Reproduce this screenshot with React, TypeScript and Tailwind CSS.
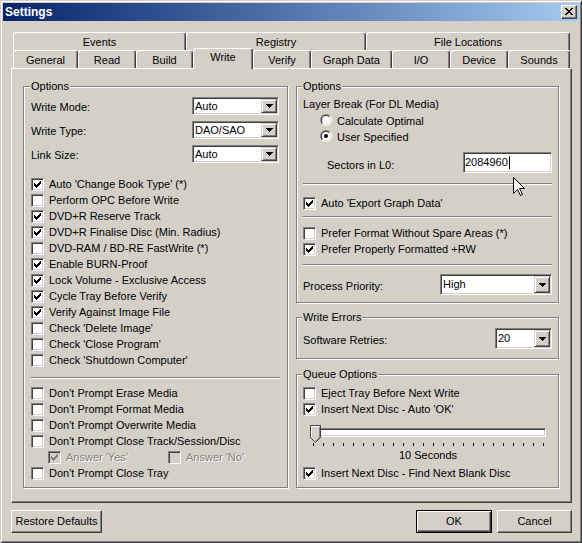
import { useId } from 'react';

// classic 3D edges
const sunken =
  'border border-t-[#808080] border-l-[#808080] border-r-white border-b-white shadow-[inset_1px_1px_#404040,inset_-1px_-1px_#d4d0c8]';
const raised =
  'border border-t-[#d4d0c8] border-l-[#d4d0c8] border-r-[#404040] border-b-[#404040] shadow-[inset_1px_1px_#fff,inset_-1px_-1px_#808080] bg-[#d4d0c8]';
const pushButton =
  'flex items-center justify-center border border-t-white border-l-white border-r-[#404040] border-b-[#404040] shadow-[inset_-1px_-1px_#808080]';

const topTabs = [
  { label: 'Events', w: 'w-[173px]' },
  { label: 'Registry', w: 'w-[180px]' },
  { label: 'File Locations', w: 'w-[204px]' },
];

const tabs = [
  { label: 'General', w: 'w-[65px]' },
  { label: 'Read', w: 'w-[58px]' },
  { label: 'Build', w: 'w-[57px]' },
  { label: 'Write', w: 'w-[60px]', active: true },
  { label: 'Verify', w: 'w-[58px]' },
  { label: 'Graph Data', w: 'w-[81px]' },
  { label: 'I/O', w: 'w-[58px]' },
  { label: 'Device', w: 'w-[58px]' },
  { label: 'Sounds', w: 'w-[62px]' },
];

const writeChecks: [string, boolean][] = [
  ["Auto 'Change Book Type' (*)", true],
  ['Perform OPC Before Write', false],
  ['DVD+R Reserve Track', true],
  ['DVD+R Finalise Disc (Min. Radius)', true],
  ['DVD-RAM / BD-RE FastWrite (*)', false],
  ['Enable BURN-Proof', true],
  ['Lock Volume - Exclusive Access', true],
  ['Cycle Tray Before Verify', true],
  ['Verify Against Image File', true],
  ["Check 'Delete Image'", false],
  ["Check 'Close Program'", false],
  ["Check 'Shutdown Computer'", false],
];

const CHECK_PIXELS = [0, 1, 2, 3, 4, 5, 6].map((x) => [x, x <= 2 ? x + 2 : 6 - x]);

function CheckMark({ color }: { color: string }) {
  return (
    <svg width="7" height="7" viewBox="0 0 7 7" shapeRendering="crispEdges">
      {CHECK_PIXELS.map(([x, y]) => (
        <rect key={x} x={x} y={y} width="1" height="3" fill={color} />
      ))}
    </svg>
  );
}

function Box({ checked, disabled }: { checked?: boolean; disabled?: boolean }) {
  return (
    <span
      className={`mt-px flex h-[13px] w-[13px] shrink-0 items-center justify-center ${sunken} ${
        disabled ? 'bg-[#d4d0c8]' : 'bg-white'
      }`}
    >
      {checked && <CheckMark color={disabled ? '#808080' : '#000'} />}
    </span>
  );
}

function CheckRow({
  label,
  checked,
  disabled,
  className = '',
}: {
  label: string;
  checked?: boolean;
  disabled?: boolean;
  className?: string;
}) {
  return (
    <div className={`flex h-[16px] items-start ${className}`}>
      <Box checked={checked} disabled={disabled} />
      <span
        className={`ml-[5px] whitespace-nowrap leading-[14px] ${
          disabled ? 'text-[#808080] [text-shadow:1px_1px_0_#fff]' : ''
        }`}
      >
        {label}
      </span>
    </div>
  );
}

function Radio({ label, checked }: { label: string; checked?: boolean }) {
  const id = useId();
  return (
    <div className="flex h-[16px] items-center pl-[17px]">
      <svg width="12" height="12" viewBox="0 0 12 12">
        <defs>
          <clipPath id={`${id}a`}>
            <polygon points="0,0 12,0 0,12" />
          </clipPath>
          <clipPath id={`${id}b`}>
            <polygon points="12,0 12,12 0,12" />
          </clipPath>
        </defs>
        <circle cx="6" cy="6" r="6" fill="#808080" clipPath={`url(#${id}a)`} />
        <circle cx="6" cy="6" r="6" fill="#fff" clipPath={`url(#${id}b)`} />
        <circle cx="6" cy="6" r="5" fill="#404040" clipPath={`url(#${id}a)`} />
        <circle cx="6" cy="6" r="5" fill="#d4d0c8" clipPath={`url(#${id}b)`} />
        <circle cx="6" cy="6" r="4" fill="#fff" />
        {checked && <circle cx="6" cy="6" r="2" fill="#000" />}
      </svg>
      <span className="ml-[5px] mt-px leading-[16px]">{label}</span>
    </div>
  );
}

function Combo({ value, className }: { value: string; className: string }) {
  return (
    <div className={`flex bg-white p-px ${sunken} ${className}`}>
      <span className="flex flex-1 items-center pl-[1px]">{value}</span>
      <span className={`flex w-[16px] items-center justify-center ${raised}`}>
        <svg width="7" height="4" viewBox="0 0 7 4" shapeRendering="crispEdges">
          <rect x="0" y="0" width="7" height="1" />
          <rect x="1" y="1" width="5" height="1" />
          <rect x="2" y="2" width="3" height="1" />
          <rect x="3" y="3" width="1" height="1" />
        </svg>
      </span>
    </div>
  );
}

function Separator({ className = '' }: { className?: string }) {
  return <div className={`h-[2px] border-y border-t-[#808080] border-b-white ${className}`} />;
}

function Group({
  title,
  className,
  children,
}: {
  title: string;
  className: string;
  children: React.ReactNode;
}) {
  return (
    <fieldset
      className={`min-w-0 border border-[#808080] shadow-[1px_1px_0_#fff,inset_1px_1px_0_#fff] ${className}`}
    >
      <legend className="-ml-px bg-[#d4d0c8] px-px leading-[13px]">{title}</legend>
      {children}
    </fieldset>
  );
}

function Tab({ label, w, active }: { label: string; w: string; active?: boolean }) {
  return (
    <div
      className={`flex justify-center rounded-t-[3px] border-x border-t border-l-white border-t-white border-r-[#404040] bg-[#d4d0c8] leading-[17px] shadow-[inset_-1px_0_#808080] ${w} ${
        active ? 'relative z-10 -mt-[2px] h-[21px]' : 'h-[18px] pt-px'
      }`}
    >
      {label}
    </div>
  );
}

export default function App() {
  return (
    <div className="relative h-[543px] w-[582px] overflow-hidden bg-[#d4d0c8] p-[3px] font-['Liberation_Sans',Arial,sans-serif] text-[11px] text-black shadow-[inset_1px_1px_#d4d0c8,inset_-1px_-1px_#404040,inset_2px_2px_#fff,inset_-2px_-2px_#808080]">
      {/* title bar */}
      <div className="flex h-[18px] items-center justify-between bg-linear-to-r from-[#0a246a] to-[#a6caf0] px-[2px]">
        <span className="text-[12px] font-bold leading-[18px] text-white">Settings</span>
        <div className={`flex h-[14px] w-[16px] items-start justify-start pl-[3px] pt-[2px] ${pushButton} bg-[#d4d0c8]`}>
          <svg width="8" height="7" viewBox="0 0 8 7" shapeRendering="crispEdges">
            {[0, 1, 2, 3, 4, 5, 6].map((y) => {
              const x = y <= 3 ? y : 6 - y;
              return (
                <g key={y}>
                  <rect x={x} y={y} width="2" height="1" />
                  <rect x={6 - x} y={y} width="2" height="1" />
                </g>
              );
            })}
          </svg>
        </div>
      </div>

      <div className="px-[8px] pt-[11px]">
        {/* tabs */}
        <div className="flex pl-[2px]">
          {topTabs.map((t) => (
            <Tab key={t.label} label={t.label} w={t.w} />
          ))}
        </div>
        <div className="flex h-[18px] pl-[2px]">
          {tabs.map((t) => (
            <Tab key={t.label} label={t.label} w={t.w} active={t.active} />
          ))}
        </div>

        {/* page */}
        <div className="flex h-[435px] w-[561px] gap-[8px] border border-t-white border-l-white border-r-[#404040] border-b-[#404040] pl-[11px] pt-[11px] shadow-[inset_-1px_-1px_#808080]">
          <Group title="Options" className="h-[408px] w-[265px] px-[7px]">
            <div className="mt-[4px] flex flex-col gap-[6px] pr-px">
              {[
                ['Write Mode:', 'Auto'],
                ['Write Type:', 'DAO/SAO'],
                ['Link Size:', 'Auto'],
              ].map(([label, value]) => (
                <div key={label} className="flex h-[18px] items-center justify-between">
                  <span className="mt-[3px]">{label}</span>
                  <Combo value={value} className="h-[18px] w-[87px]" />
                </div>
              ))}
            </div>
            <div className="mt-[14px]">
              {writeChecks.map(([label, checked]) => (
                <CheckRow key={label} label={label} checked={checked} />
              ))}
            </div>
            <Separator className="mt-[8px]" />
            <div className="mt-[7px]">
              <CheckRow label="Don't Prompt Erase Media" />
              <CheckRow label="Don't Prompt Format Media" />
              <CheckRow label="Don't Prompt Overwrite Media" />
              <CheckRow label="Don't Prompt Close Track/Session/Disc" />
              <div className="flex pl-[17px]">
                <CheckRow label="Answer 'Yes'" checked disabled className="w-[120px]" />
                <CheckRow label="Answer 'No'" disabled />
              </div>
              <CheckRow label="Don't Prompt Close Tray" />
            </div>
          </Group>

          <div className="flex w-[263px] flex-col">
            <Group title="Options" className="h-[223px] px-[6px]">
              <div className="mt-[3px] h-[16px] leading-[16px]">Layer Break (For DL Media)</div>
              <Radio label="Calculate Optimal" />
              <Radio label="User Specified" checked />
              <div className="mt-[8px] flex h-[21px] items-center justify-between">
                <span className="mt-[5px] pl-[24px]">Sectors in L0:</span>
                <div className={`flex h-[21px] w-[89px] items-center bg-white pl-px ${sunken}`}>
                  <span>2084960</span>
                  <span className="ml-px h-[13px] w-px bg-black" />
                </div>
              </div>
              <Separator className="mt-[10px]" />
              <CheckRow label="Auto 'Export Graph Data'" checked className="mt-[11px]" />
              <Separator className="mt-[4px]" />
              <CheckRow label="Prefer Format Without Spare Areas (*)" className="mt-[8px]" />
              <CheckRow label="Prefer Properly Formatted +RW" checked />
              <Separator className="mt-[6px]" />
              <div className="mt-[8px] flex h-[21px] items-center justify-between">
                <span className="mt-[4px]">Process Priority:</span>
                <Combo value="High" className="h-[21px] w-[112px]" />
              </div>
            </Group>

            <Group title="Write Errors" className="mt-[8px] h-[48px] px-[6px]">
              <div className="mt-[4px] flex h-[21px] items-center justify-between">
                <span className="mt-[3px]">Software Retries:</span>
                <Combo value="20" className="h-[21px] w-[57px]" />
              </div>
            </Group>

            <Group title="Queue Options" className="mt-[9px] h-[120px] px-[6px]">
              <CheckRow label="Eject Tray Before Next Write" className="mt-[5px]" />
              <CheckRow label="Insert Next Disc - Auto 'OK'" checked />
              <div className="relative ml-[7px] mt-[7px] w-[236px] pt-[3px]">
                <div className={`h-[9px] bg-white ${sunken}`} />
                <svg className="absolute left-0 top-0" width="11" height="18" viewBox="0 0 11 18">
                  <polygon points="0.5,0.5 10.5,0.5 10.5,12.5 5.5,17.5 0.5,12.5" fill="#d4d0c8" stroke="#404040" />
                  <polyline points="1.5,12.5 1.5,1.5 9.5,1.5" fill="none" stroke="#fff" />
                  <polyline points="9.5,2 9.5,12.2 5.5,16.2" fill="none" stroke="#808080" />
                </svg>
                <div className="ml-[3px] mt-[6px] flex h-[3px] gap-[9px]">
                  {Array.from({ length: 24 }, (_, i) => (
                    <span key={i} className="h-[3px] w-px bg-black" />
                  ))}
                </div>
                <div className="mt-px text-center leading-[16px]">10 Seconds</div>
              </div>
              <CheckRow label="Insert Next Disc - Find Next Blank Disc" checked className="mt-[3px]" />
            </Group>
          </div>
        </div>

        {/* buttons */}
        <div className="mt-[7px] flex w-[561px]">
          <div className={`h-[23px] w-[91px] ${pushButton}`}>Restore Defaults</div>
          <div className="flex-1" />
          <div className="flex h-[23px] w-[76px] items-center justify-center border border-black shadow-[inset_1px_1px_#fff,inset_-1px_-1px_#404040,inset_-2px_-2px_#808080]">
            OK
          </div>
          <div className={`ml-[5px] h-[23px] w-[75px] ${pushButton}`}>Cancel</div>
        </div>
      </div>

      {/* mouse pointer */}
      <svg className="absolute left-[513px] top-[177px]" width="13" height="20" viewBox="0 0 13 20">
        <polygon
          points="0.5,0.5 0.5,16.5 4.5,12.5 7.5,18.5 9.5,17.5 6.5,11.5 11.5,11.5"
          fill="#fff"
          stroke="#000"
          strokeLinejoin="miter"
        />
      </svg>
    </div>
  );
}
